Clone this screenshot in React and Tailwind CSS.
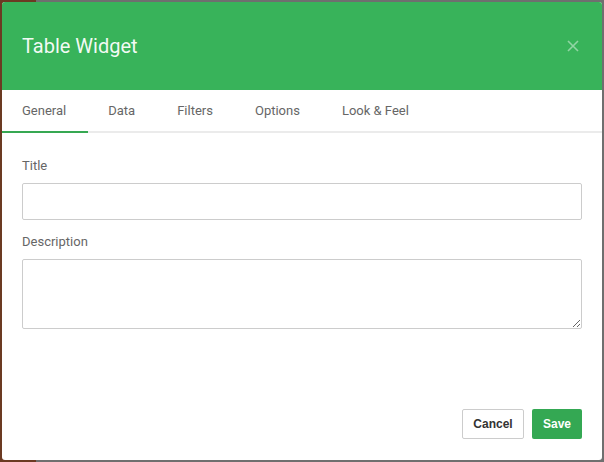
import React from 'react';

const tabs = ['General', 'Data', 'Filters', 'Options', 'Look & Feel'];

function App() {
  return (
    <div className="w-[604px] h-[462px] p-[2px] bg-[linear-gradient(to_right,#6b3a22_0%,#6b3a22_6%,#6f6f6f_6%,#6f6f6f_100%)] font-['Roboto',sans-serif]">
      <div className="h-full flex flex-col bg-white rounded-[3px] overflow-hidden">
        <div className="h-[88px] shrink-0 bg-[#38b35a] px-5 flex items-center justify-between">
          <h1 className="text-[20px] font-normal text-white/95">Table Widget</h1>
          <button className="w-5 h-5 flex items-center justify-center text-white/45 mr-[-1px]">
            <svg width="12" height="12" viewBox="0 0 12 12" fill="none" stroke="currentColor" strokeWidth="1.6">
              <path d="M1 1l10 10M11 1L1 11" />
            </svg>
          </button>
        </div>

        <div className="h-[43px] shrink-0 flex border-b-2 border-[#ebebeb]">
          {tabs.map((t, i) => (
            <div
              key={t}
              className={
                'px-5 flex items-center text-[13px] text-[#666] -mb-[2px] border-b-2 ' +
                (i === 0 ? 'border-[#36a852]' : 'border-transparent')
              }
            >
              <span className="pr-[2px]">{t}</span>
            </div>
          ))}
        </div>

        <div className="flex-1 flex flex-col px-5 pt-[24px]">
          <label className="text-[13px] leading-[18px] text-[#666]">Title</label>
          <input className="mt-[8px] h-[37px] border border-[#ccc] rounded-[2px] px-2 outline-none" />
          <label className="mt-[13px] text-[13px] leading-[18px] text-[#666]">Description</label>
          <textarea className="mt-[8px] h-[70px] border border-[#ccc] rounded-[2px] px-2 outline-none resize-y" />

          <div className="mt-auto pb-[21px] flex justify-end gap-2">
            <button className="w-[62px] h-[30px] rounded-[2px] border border-[#ccc] bg-white text-[12px] font-bold text-[#333] font-['Liberation_Sans',sans-serif]">
              Cancel
            </button>
            <button className="w-[50px] h-[30px] rounded-[2px] bg-[#34a853] text-[12px] font-bold text-white font-['Liberation_Sans',sans-serif]">
              Save
            </button>
          </div>
        </div>
      </div>
    </div>
  );
}

export default App;
